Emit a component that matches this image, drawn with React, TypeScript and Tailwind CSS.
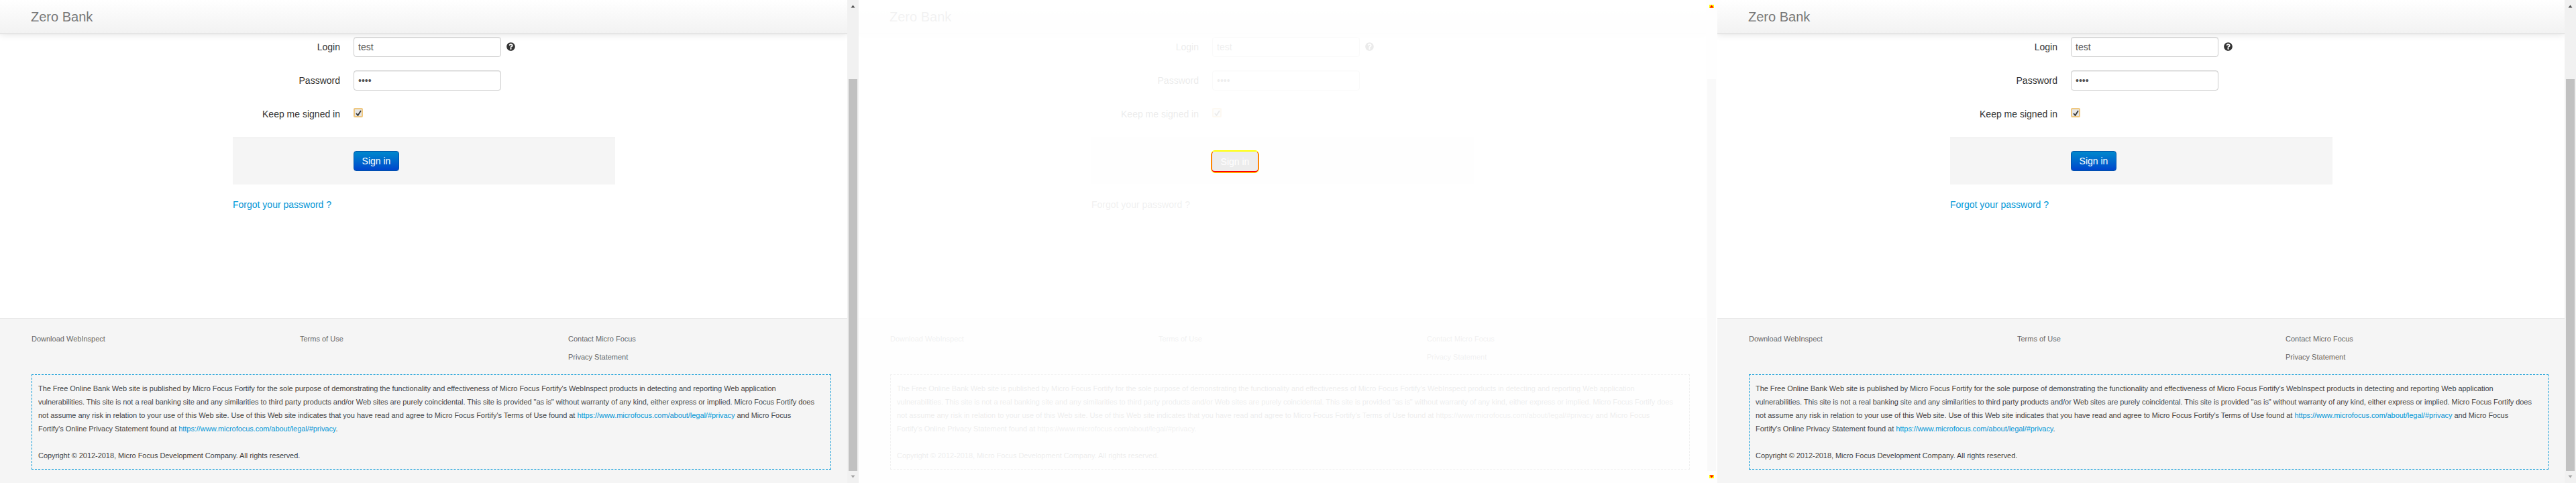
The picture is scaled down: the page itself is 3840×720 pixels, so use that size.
import { ReactNode } from 'react';
import { FaQuestionCircle } from 'react-icons/fa';

function Arrow({ up, faded }: { up?: boolean; faded?: boolean }) {
  const color = faded ? '#ff0000' : up ? '#505050' : '#a3a3a3';
  return (
    <svg width="7" height="5" viewBox="0 0 7 5" className="block">
      {faded && <rect width="7" height="5" fill="#ffff00" />}
      <path d={up ? 'M3.5 0.5 L6.5 4.5 L0.5 4.5 Z' : 'M0.5 0.5 L6.5 0.5 L3.5 4.5 Z'} fill={color} />
    </svg>
  );
}

function Scrollbar({ faded }: { faded?: boolean }) {
  return (
    <div className="flex w-[17px] shrink-0 flex-col items-center bg-[#f1f1f1]">
      <div className="relative z-20 h-[17px] pt-[7px]">
        <Arrow up faded={faded} />
      </div>
      <div className="mt-[101px] h-[584px] w-[13px] shrink-0 bg-[#c1c1c1]" />
      <div className="relative z-20 h-[18px] pt-[6px]">
        <Arrow faded={faded} />
      </div>
    </div>
  );
}

function Field({ label, children }: { label: string; children: ReactNode }) {
  return (
    <div className="flex">
      <label className="w-40 pt-[5px] text-right text-sm leading-5 text-[#333]">{label}</label>
      <div className="ml-5 flex">{children}</div>
    </div>
  );
}

function TextBox({ value, password }: { value: string; password?: boolean }) {
  return (
    <input
      readOnly
      type={password ? 'password' : 'text'}
      value={value}
      className="h-[30px] w-[220px] rounded-[4px] border border-[#ccc] bg-white px-1.5 text-sm text-[#555] shadow-[inset_0_1px_1px_rgba(0,0,0,0.075)]"
    />
  );
}

function Pane({ faded }: { faded?: boolean }) {
  const link = faded ? 'text-[#666]' : 'text-[#0096d6]';
  return (
    <div className="relative flex h-[720px] w-[1280px] shrink-0 overflow-hidden">
      <div className="flex min-w-0 flex-1 flex-col bg-white">
        <header className="h-[51px] shrink-0 border-b border-[#d4d4d4] bg-gradient-to-b from-white to-[#f2f2f2] pl-[46px] shadow-[0_1px_10px_rgba(0,0,0,0.1)]">
          <span className="block pt-[10px] text-xl leading-[30px] font-extralight text-[#777] [text-shadow:0_1px_0_#fff]">Zero Bank</span>
        </header>

        <main className="ml-[347px] w-[570px] flex-1 pt-1">
          <div className="flex flex-col gap-5">
            <Field label="Login">
              <TextBox value="test" />
              <FaQuestionCircle size={13} className="mt-2 ml-2 text-[#333]" />
            </Field>
            <Field label="Password">
              <TextBox value="test" password />
            </Field>
            <Field label="Keep me signed in">
              <span className="mt-1.5 flex h-[14px] w-[14px] items-center justify-center rounded-[2px] border-2 border-[#efc77f] bg-[#e6e6e6]">
                <svg width="9" height="9" viewBox="0 0 9 9">
                  <path d="M1 5 L3.5 8 L8 1" fill="none" stroke="#333" strokeWidth="1.8" />
                </svg>
              </span>
            </Field>
          </div>
          <div className="mt-[25px] h-[70px] border-t border-[#e5e5e5] bg-[#f5f5f5] pt-[19px] pl-[180px]">
            {faded ? (
              <button className="relative z-20 -ml-px block h-[32px] w-[70px] rounded-[5px] border border-b-2 border-x-[#ff0000] border-t-[#ffff00] border-b-[#ff0000] bg-[#ececec] text-sm text-white outline-1 outline-[#ffff00]">
                Sign in
              </button>
            ) : (
              <button className="block h-[30px] w-[68px] rounded-[4px] border border-[#0052a8] bg-gradient-to-b from-[#0088cc] to-[#0044cc] text-sm text-white">
                Sign in
              </button>
            )}
          </div>
          <a className={`mt-5 block text-sm leading-5 ${link}`}>Forgot your password ?</a>
        </main>

        <footer className="h-[246px] shrink-0 border-t border-[#e5e5e5] bg-[#f5f5f5] pt-5 pl-[47px] text-[11px] text-[#666]">
          <div className="grid w-[1200px] grid-cols-3">
            <div className="leading-5">Download WebInspect</div>
            <div className="leading-5">Terms of Use</div>
            <div className="flex flex-col gap-[7px] leading-5">
              <span>Contact Micro Focus</span>
              <span>Privacy Statement</span>
            </div>
          </div>
          <div className={`mt-4 h-[142px] w-[1192px] border border-dashed px-[9px] pt-[10px] text-[11px] leading-5 tracking-[-0.045px] whitespace-nowrap text-[#444] ${faded ? 'border-[#666]' : 'border-[#0096d6]'}`}>
            <p>
              The Free Online Bank Web site is published by Micro Focus Fortify for the sole purpose of demonstrating the functionality and effectiveness of Micro Focus Fortify's WebInspect products in detecting and reporting Web application
              <br />
              vulnerabilities. This site is not a real banking site and any similarities to third party products and/or Web sites are purely coincidental. This site is provided "as is" without warranty of any kind, either express or implied. Micro Focus Fortify does
              <br />
              not assume any risk in relation to your use of this Web site. Use of this Web site indicates that you have read and agree to Micro Focus Fortify's Terms of Use found at{' '}
              <a className={link}>https://www.microfocus.com/about/legal/#privacy</a> and Micro Focus
              <br />
              Fortify's Online Privacy Statement found at <a className={link}>https://www.microfocus.com/about/legal/#privacy</a>.
            </p>
            <p className="mt-5">Copyright © 2012-2018, Micro Focus Development Company. All rights reserved.</p>
          </div>
        </footer>
      </div>
      <Scrollbar faded={faded} />
      {faded && <div className="absolute inset-0 z-10 bg-white/90" />}
    </div>
  );
}

export default function App() {
  return (
    <div className="flex h-[720px] w-[3840px] overflow-hidden font-['Liberation_Sans',Arial,sans-serif]">
      <Pane />
      <Pane faded />
      <Pane />
    </div>
  );
}
